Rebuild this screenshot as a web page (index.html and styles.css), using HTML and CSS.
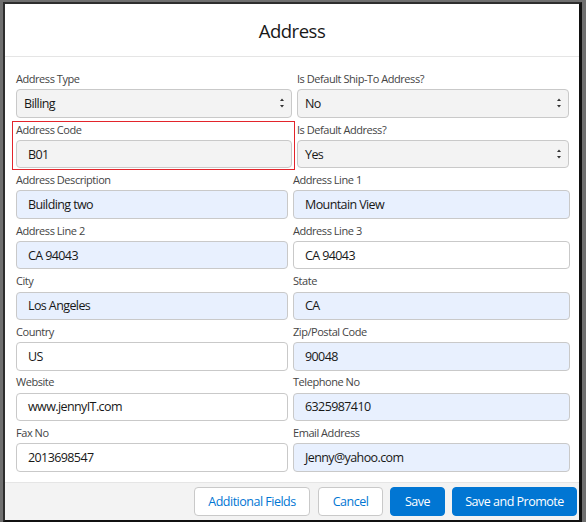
FILE: index.html
```html
<!DOCTYPE html>
<html lang="en">
<head>
<meta charset="utf-8">
<title>Address</title>
<link rel="stylesheet" href="styles.css">
</head>
<body>
<div class="modal">
  <header class="modal-header"><h2 class="modal-title">Address</h2></header>
  <div class="modal-body">
    <div class="grid grid-top">
      <div class="field">
        <label class="label">Address Type</label>
        <div class="select"><span>Billing</span><svg class="arrows" width="6" height="12" viewBox="0 0 6 12"><path d="M3 1.5 L5 4 L1 4 Z M1 8 L5 8 L3 10.5 Z" fill="#333"/></svg></div>
      </div>
      <div class="field">
        <label class="label">Is Default Ship-To Address?</label>
        <div class="select"><span>No</span><svg class="arrows" width="6" height="12" viewBox="0 0 6 12"><path d="M3 1.5 L5 4 L1 4 Z M1 8 L5 8 L3 10.5 Z" fill="#333"/></svg></div>
      </div>
      <div class="field field-flagged">
        <label class="label">Address Code</label>
        <div class="input input-disabled">B01</div>
      </div>
      <div class="field">
        <label class="label">Is Default Address?</label>
        <div class="select"><span>Yes</span><svg class="arrows" width="6" height="12" viewBox="0 0 6 12"><path d="M3 1.5 L5 4 L1 4 Z M1 8 L5 8 L3 10.5 Z" fill="#333"/></svg></div>
      </div>
    </div>
    <div class="grid grid-main">
      <div class="field"><label class="label">Address Description</label><div class="input input-filled">Building two</div></div>
      <div class="field"><label class="label">Address Line 1</label><div class="input input-filled">Mountain View</div></div>
      <div class="field"><label class="label">Address Line 2</label><div class="input input-filled">CA 94043</div></div>
      <div class="field"><label class="label">Address Line 3</label><div class="input">CA 94043</div></div>
      <div class="field"><label class="label">City</label><div class="input input-filled">Los Angeles</div></div>
      <div class="field"><label class="label">State</label><div class="input input-filled">CA</div></div>
      <div class="field"><label class="label">Country</label><div class="input">US</div></div>
      <div class="field"><label class="label">Zip/Postal Code</label><div class="input input-filled">90048</div></div>
      <div class="field"><label class="label">Website</label><div class="input">www.jennyIT.com</div></div>
      <div class="field"><label class="label">Telephone No</label><div class="input input-filled">6325987410</div></div>
      <div class="field"><label class="label">Fax No</label><div class="input">2013698547</div></div>
      <div class="field"><label class="label">Email Address</label><div class="input input-filled">Jenny@yahoo.com</div></div>
    </div>
  </div>
  <footer class="modal-footer">
    <button class="btn btn-neutral btn-additional">Additional Fields</button>
    <button class="btn btn-neutral btn-cancel">Cancel</button>
    <button class="btn btn-brand btn-save">Save</button>
    <button class="btn btn-brand btn-promote">Save and Promote</button>
  </footer>
</div>
</body>
</html>
```

FILE: styles.css
```css
* { box-sizing: border-box; }
html, body { margin: 0; padding: 0; }
body {
  background: #6f6f6f;
  width: 586px;
  height: 522px;
  overflow: hidden;
  font-family: "Open Sans", "Noto Sans", sans-serif;
  color: #181818;
}
.modal {
  margin: 2px 0 0 3px;
  width: 579px;
  height: 520px;
  background: #fff;
  border-left: 2px solid #2e2e2e;
  border-top: 2px solid #2e2e2e;
  border-right: 3px solid #111;
  border-bottom: 2px solid #111;
  display: flex;
  flex-direction: column;
}
.modal-header {
  height: 53px;
  border-bottom: 1px solid #e5e5e5;
  display: flex;
  align-items: center;
  justify-content: center;
}
.modal-title {
  margin: 0;
  font-weight: 400;
  font-size: 18.5px;
  letter-spacing: -0.5px;
  color: #181818;
}
.modal-body {
  flex: 1;
  padding: 13px 9px 0 11px;
  display: flex;
  flex-direction: column;
  gap: 2.9px;
}
.grid {
  display: grid;
  column-gap: 5px;
  row-gap: 2.9px;
}
.grid-top { grid-template-columns: 276px 272px; }
.grid-main { grid-template-columns: 272px 277px; }
.field { position: relative; }
.field-flagged::after {
  content: "";
  position: absolute;
  top: 0;
  left: -4px;
  right: -3px;
  bottom: -2px;
  border: 1px solid #e3242b;
  pointer-events: none;
}
.label {
  display: block;
  font-size: 11px;
  letter-spacing: -0.45px;
  line-height: 18px;
  margin-bottom: 1.3px;
  color: #444;
}
.input, .select {
  height: 28.4px;
  border: 1px solid #c9c9c9;
  border-radius: 4px;
  font-size: 12.5px;
  letter-spacing: -0.6px;
  color: #181818;
  display: flex;
  align-items: center;
  background: #fff;
}
.input { padding: 0 0 0 11px; }
.input-filled { background: #e8f0fe; }
.input-disabled { background: #f3f3f3; }
.select {
  background: #f3f3f3;
  padding: 0 6px 0 7px;
  justify-content: space-between;
}
.arrows { display: block; }
.modal-footer {
  height: 38px;
  border-top: 1px solid #e5e5e5;
  background: #f3f3f3;
  display: flex;
  justify-content: flex-end;
  align-items: center;
  gap: 7px;
  padding: 0 2px 0 0;
}
.btn {
  height: 29px;
  border-radius: 4px;
  font-family: inherit;
  font-size: 12.5px;
  letter-spacing: -0.5px;
  padding: 0;
  cursor: pointer;
}
.btn-neutral {
  background: #fff;
  border: 1px solid #c9c9c9;
  color: #0176d3;
}
.btn-brand {
  background: #0176d3;
  border: 1px solid #0176d3;
  color: #fff;
}
.btn-additional { width: 116px; margin-right: 1px; }
.btn-cancel { width: 65px; }
.btn-save { width: 55px; }
.btn-promote { width: 125px; }
```
